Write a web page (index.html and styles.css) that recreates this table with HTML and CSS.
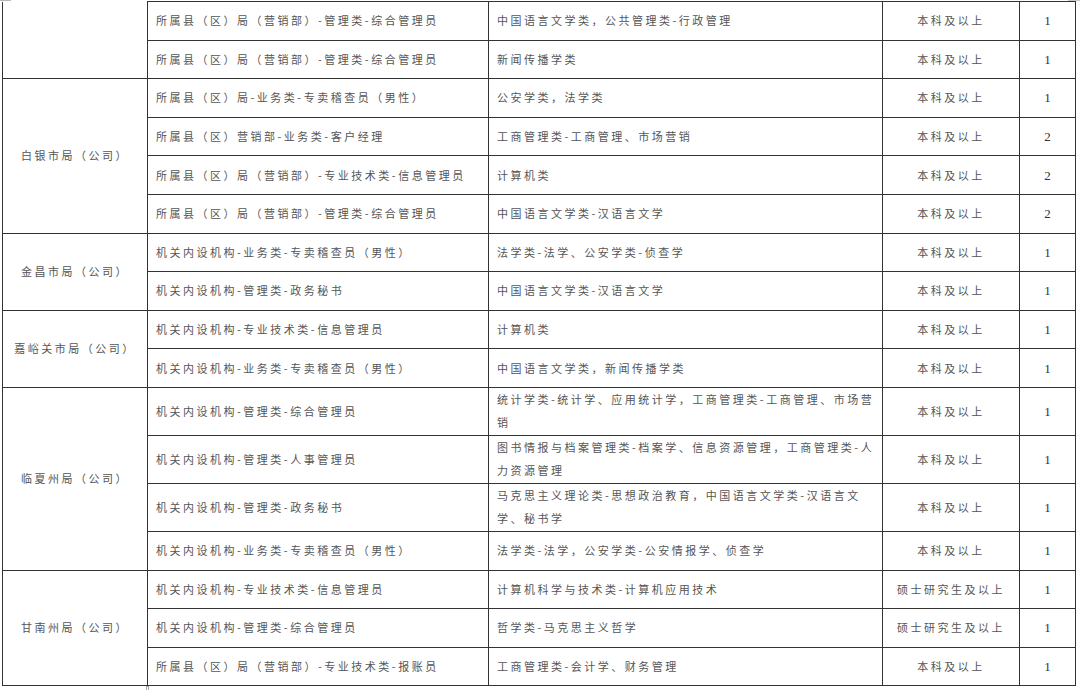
FILE: index.html
```html
<!DOCTYPE html>
<html lang="zh-CN">
<head>
<meta charset="utf-8">
<title>岗位表</title>
<link rel="stylesheet" href="styles.css">
</head>
<body>
<div class="page">
  <span class="mark-tl"></span>
  <span class="mark-tr"></span>
  <table class="grid">
    <colgroup>
      <col class="c-unit">
      <col class="c-post">
      <col class="c-major">
      <col class="c-edu">
      <col class="c-num">
    </colgroup>
    <tbody>
      <tr class="s">
        <td class="unit cont" rowspan="2"></td>
        <td class="post">所属县（区）局（营销部）-管理类-综合管理员</td>
        <td class="major">中国语言文学类，公共管理类-行政管理</td>
        <td class="edu">本科及以上</td>
        <td class="num">1</td>
      </tr>
      <tr class="s">
        <td class="post">所属县（区）局（营销部）-管理类-综合管理员</td>
        <td class="major">新闻传播学类</td>
        <td class="edu">本科及以上</td>
        <td class="num">1</td>
      </tr>
      <tr class="s">
        <td class="unit" rowspan="4">白银市局（公司）</td>
        <td class="post">所属县（区）局-业务类-专卖稽查员（男性）</td>
        <td class="major">公安学类，法学类</td>
        <td class="edu">本科及以上</td>
        <td class="num">1</td>
      </tr>
      <tr class="s">
        <td class="post">所属县（区）营销部-业务类-客户经理</td>
        <td class="major">工商管理类-工商管理、市场营销</td>
        <td class="edu">本科及以上</td>
        <td class="num">2</td>
      </tr>
      <tr class="s">
        <td class="post">所属县（区）局（营销部）-专业技术类-信息管理员</td>
        <td class="major">计算机类</td>
        <td class="edu">本科及以上</td>
        <td class="num">2</td>
      </tr>
      <tr class="s">
        <td class="post">所属县（区）局（营销部）-管理类-综合管理员</td>
        <td class="major">中国语言文学类-汉语言文学</td>
        <td class="edu">本科及以上</td>
        <td class="num">2</td>
      </tr>
      <tr class="s">
        <td class="unit" rowspan="2">金昌市局（公司）</td>
        <td class="post">机关内设机构-业务类-专卖稽查员（男性）</td>
        <td class="major">法学类-法学、公安学类-侦查学</td>
        <td class="edu">本科及以上</td>
        <td class="num">1</td>
      </tr>
      <tr class="s">
        <td class="post">机关内设机构-管理类-政务秘书</td>
        <td class="major">中国语言文学类-汉语言文学</td>
        <td class="edu">本科及以上</td>
        <td class="num">1</td>
      </tr>
      <tr class="s">
        <td class="unit" rowspan="2">嘉峪关市局（公司）</td>
        <td class="post">机关内设机构-专业技术类-信息管理员</td>
        <td class="major">计算机类</td>
        <td class="edu">本科及以上</td>
        <td class="num">1</td>
      </tr>
      <tr class="s">
        <td class="post">机关内设机构-业务类-专卖稽查员（男性）</td>
        <td class="major">中国语言文学类，新闻传播学类</td>
        <td class="edu">本科及以上</td>
        <td class="num">1</td>
      </tr>
      <tr class="d">
        <td class="unit" rowspan="4">临夏州局（公司）</td>
        <td class="post">机关内设机构-管理类-综合管理员</td>
        <td class="major">统计学类-统计学、应用统计学，工商管理类-工商管理、市场营<br>销</td>
        <td class="edu">本科及以上</td>
        <td class="num">1</td>
      </tr>
      <tr class="d">
        <td class="post">机关内设机构-管理类-人事管理员</td>
        <td class="major">图书情报与档案管理类-档案学、信息资源管理，工商管理类-人<br>力资源管理</td>
        <td class="edu">本科及以上</td>
        <td class="num">1</td>
      </tr>
      <tr class="d">
        <td class="post">机关内设机构-管理类-政务秘书</td>
        <td class="major">马克思主义理论类-思想政治教育，中国语言文学类-汉语言文<br>学、秘书学</td>
        <td class="edu">本科及以上</td>
        <td class="num">1</td>
      </tr>
      <tr class="s">
        <td class="post">机关内设机构-业务类-专卖稽查员（男性）</td>
        <td class="major">法学类-法学，公安学类-公安情报学、侦查学</td>
        <td class="edu">本科及以上</td>
        <td class="num">1</td>
      </tr>
      <tr class="s">
        <td class="unit" rowspan="3">甘南州局（公司）</td>
        <td class="post">机关内设机构-专业技术类-信息管理员</td>
        <td class="major">计算机科学与技术类-计算机应用技术</td>
        <td class="edu">硕士研究生及以上</td>
        <td class="num">1</td>
      </tr>
      <tr class="s">
        <td class="post">机关内设机构-管理类-综合管理员</td>
        <td class="major">哲学类-马克思主义哲学</td>
        <td class="edu">硕士研究生及以上</td>
        <td class="num">1</td>
      </tr>
      <tr class="s">
        <td class="post">所属县（区）局（营销部）-专业技术类-报账员</td>
        <td class="major">工商管理类-会计学、财务管理</td>
        <td class="edu">本科及以上</td>
        <td class="num">1</td>
      </tr>
    </tbody>
  </table>
  <span class="mark-bottom"></span>
</div>
</body>
</html>
```

FILE: styles.css
```css
html, body {
  margin: 0;
  padding: 0;
  background: #ffffff;
}

.page {
  position: relative;
  width: 1080px;
  height: 690px;
  overflow: hidden;
  padding: 1px 0 0 2px;
  box-sizing: border-box;
}

.grid {
  border-collapse: collapse;
  table-layout: fixed;
  width: 1073px;
  font-family: "Noto Sans CJK SC", "Noto Sans", sans-serif;
  font-size: 11px;
  letter-spacing: 2.5px;
  color: #555555;
}

.c-unit { width: 145px; }
.c-post { width: 341px; }
.c-major { width: 394px; }
.c-edu { width: 137px; }
.c-num { width: 56px; }

.grid td {
  border: 1px solid #333333;
  padding: 0;
  vertical-align: middle;
  white-space: nowrap;
  overflow: visible;
  line-height: 23px;
}

.grid tr.s { height: 38.6px; }
.grid tr.d { height: 48px; }

.grid td.cont {
  border-top: none;
}

.grid td.unit {
  text-align: center;
}

.grid td.post {
  padding-left: 8px;
}

.grid td.major {
  padding-left: 8px;
}

.grid td.edu {
  text-align: center;
}

.grid td.num {
  text-align: center;
  font-family: "Liberation Serif", serif;
  font-size: 13px;
  letter-spacing: 0;
  color: #333333;
}

.mark-tl {
  position: absolute;
  left: 0;
  top: 0;
  width: 11px;
  height: 1px;
  background: #b8b8b8;
}

.mark-tr {
  position: absolute;
  left: 1068px;
  top: 0;
  width: 12px;
  height: 1px;
  background: #c8c8c8;
}

.mark-bottom {
  position: absolute;
  left: 146px;
  top: 686px;
  width: 3px;
  height: 4px;
  border: 1px solid #aaaaaa;
  border-bottom: none;
  box-sizing: border-box;
}
```
